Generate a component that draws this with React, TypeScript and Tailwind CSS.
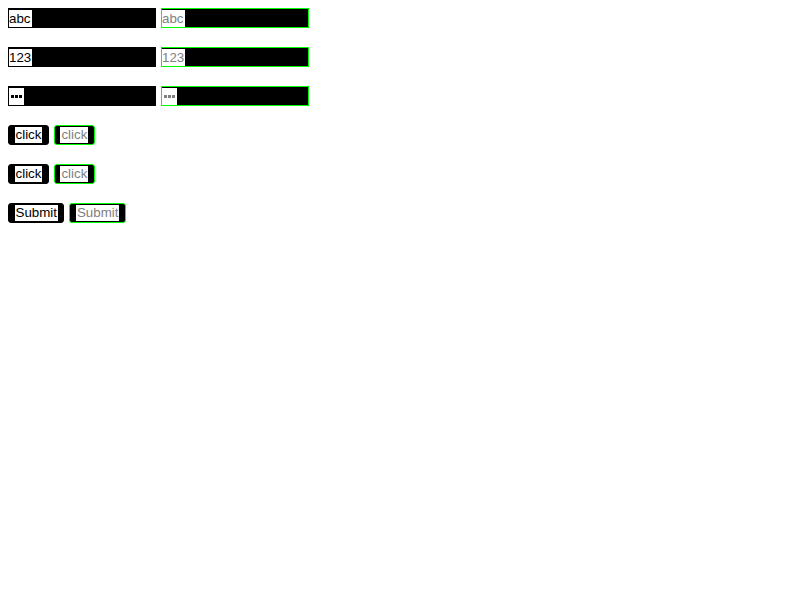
import React from 'react';

// Field-like box: black with the text sitting on a white plate
function Field({ kind, active }: { kind: 'text' | 'number' | 'password'; active?: boolean }) {
  const frame = active ? 'border-[#00ff00]' : 'border-black';
  const ink = active ? 'text-[#808080]' : 'text-black';
  const dot = active ? 'bg-[#808080]' : 'bg-black';

  return (
    <div className={`flex items-center w-[148px] h-[20px] bg-black border ${frame}`}>
      {kind === 'password' ? (
        <span className="flex items-center gap-px h-[17px] px-[2px] bg-white">
          <span className={`w-[3px] h-[3px] ${dot}`} />
          <span className={`w-[3px] h-[3px] ${dot}`} />
          <span className={`w-[3px] h-[3px] ${dot}`} />
        </span>
      ) : (
        <span className={`h-[17px] leading-[17px] bg-white pr-px ${ink}`}>
          {kind === 'text' ? 'abc' : '123'}
        </span>
      )}
    </div>
  );
}

function Btn({ label, active }: { label: string; active?: boolean }) {
  const frame = active ? 'border-[#00ff00]' : 'border-black';
  const ink = active ? 'text-[#808080]' : 'text-black';
  return (
    <div className={`flex items-center h-[20px] px-[5.5px] bg-black rounded-[3px] border ${frame}`}>
      <span className={`h-[16px] leading-[16px] bg-white px-px ${ink}`}>{label}</span>
    </div>
  );
}

export default function App() {
  return (
    <main
      className="flex flex-col gap-[19px] p-2 min-h-screen bg-white text-[13.33px]"
      style={{ fontFamily: '"Liberation Sans", Arial, sans-serif' }}
    >
      <div className="flex gap-[5px]">
        <Field kind="text" />
        <Field kind="text" active />
      </div>
      <div className="flex gap-[5px]">
        <Field kind="number" />
        <Field kind="number" active />
      </div>
      <div className="flex gap-[5px]">
        <Field kind="password" />
        <Field kind="password" active />
      </div>
      <div className="flex gap-[5px]">
        <Btn label="click" />
        <Btn label="click" active />
      </div>
      <div className="flex gap-[5px]">
        <Btn label="click" />
        <Btn label="click" active />
      </div>
      <div className="flex gap-[5px]">
        <Btn label="Submit" />
        <Btn label="Submit" active />
      </div>
    </main>
  );
}
